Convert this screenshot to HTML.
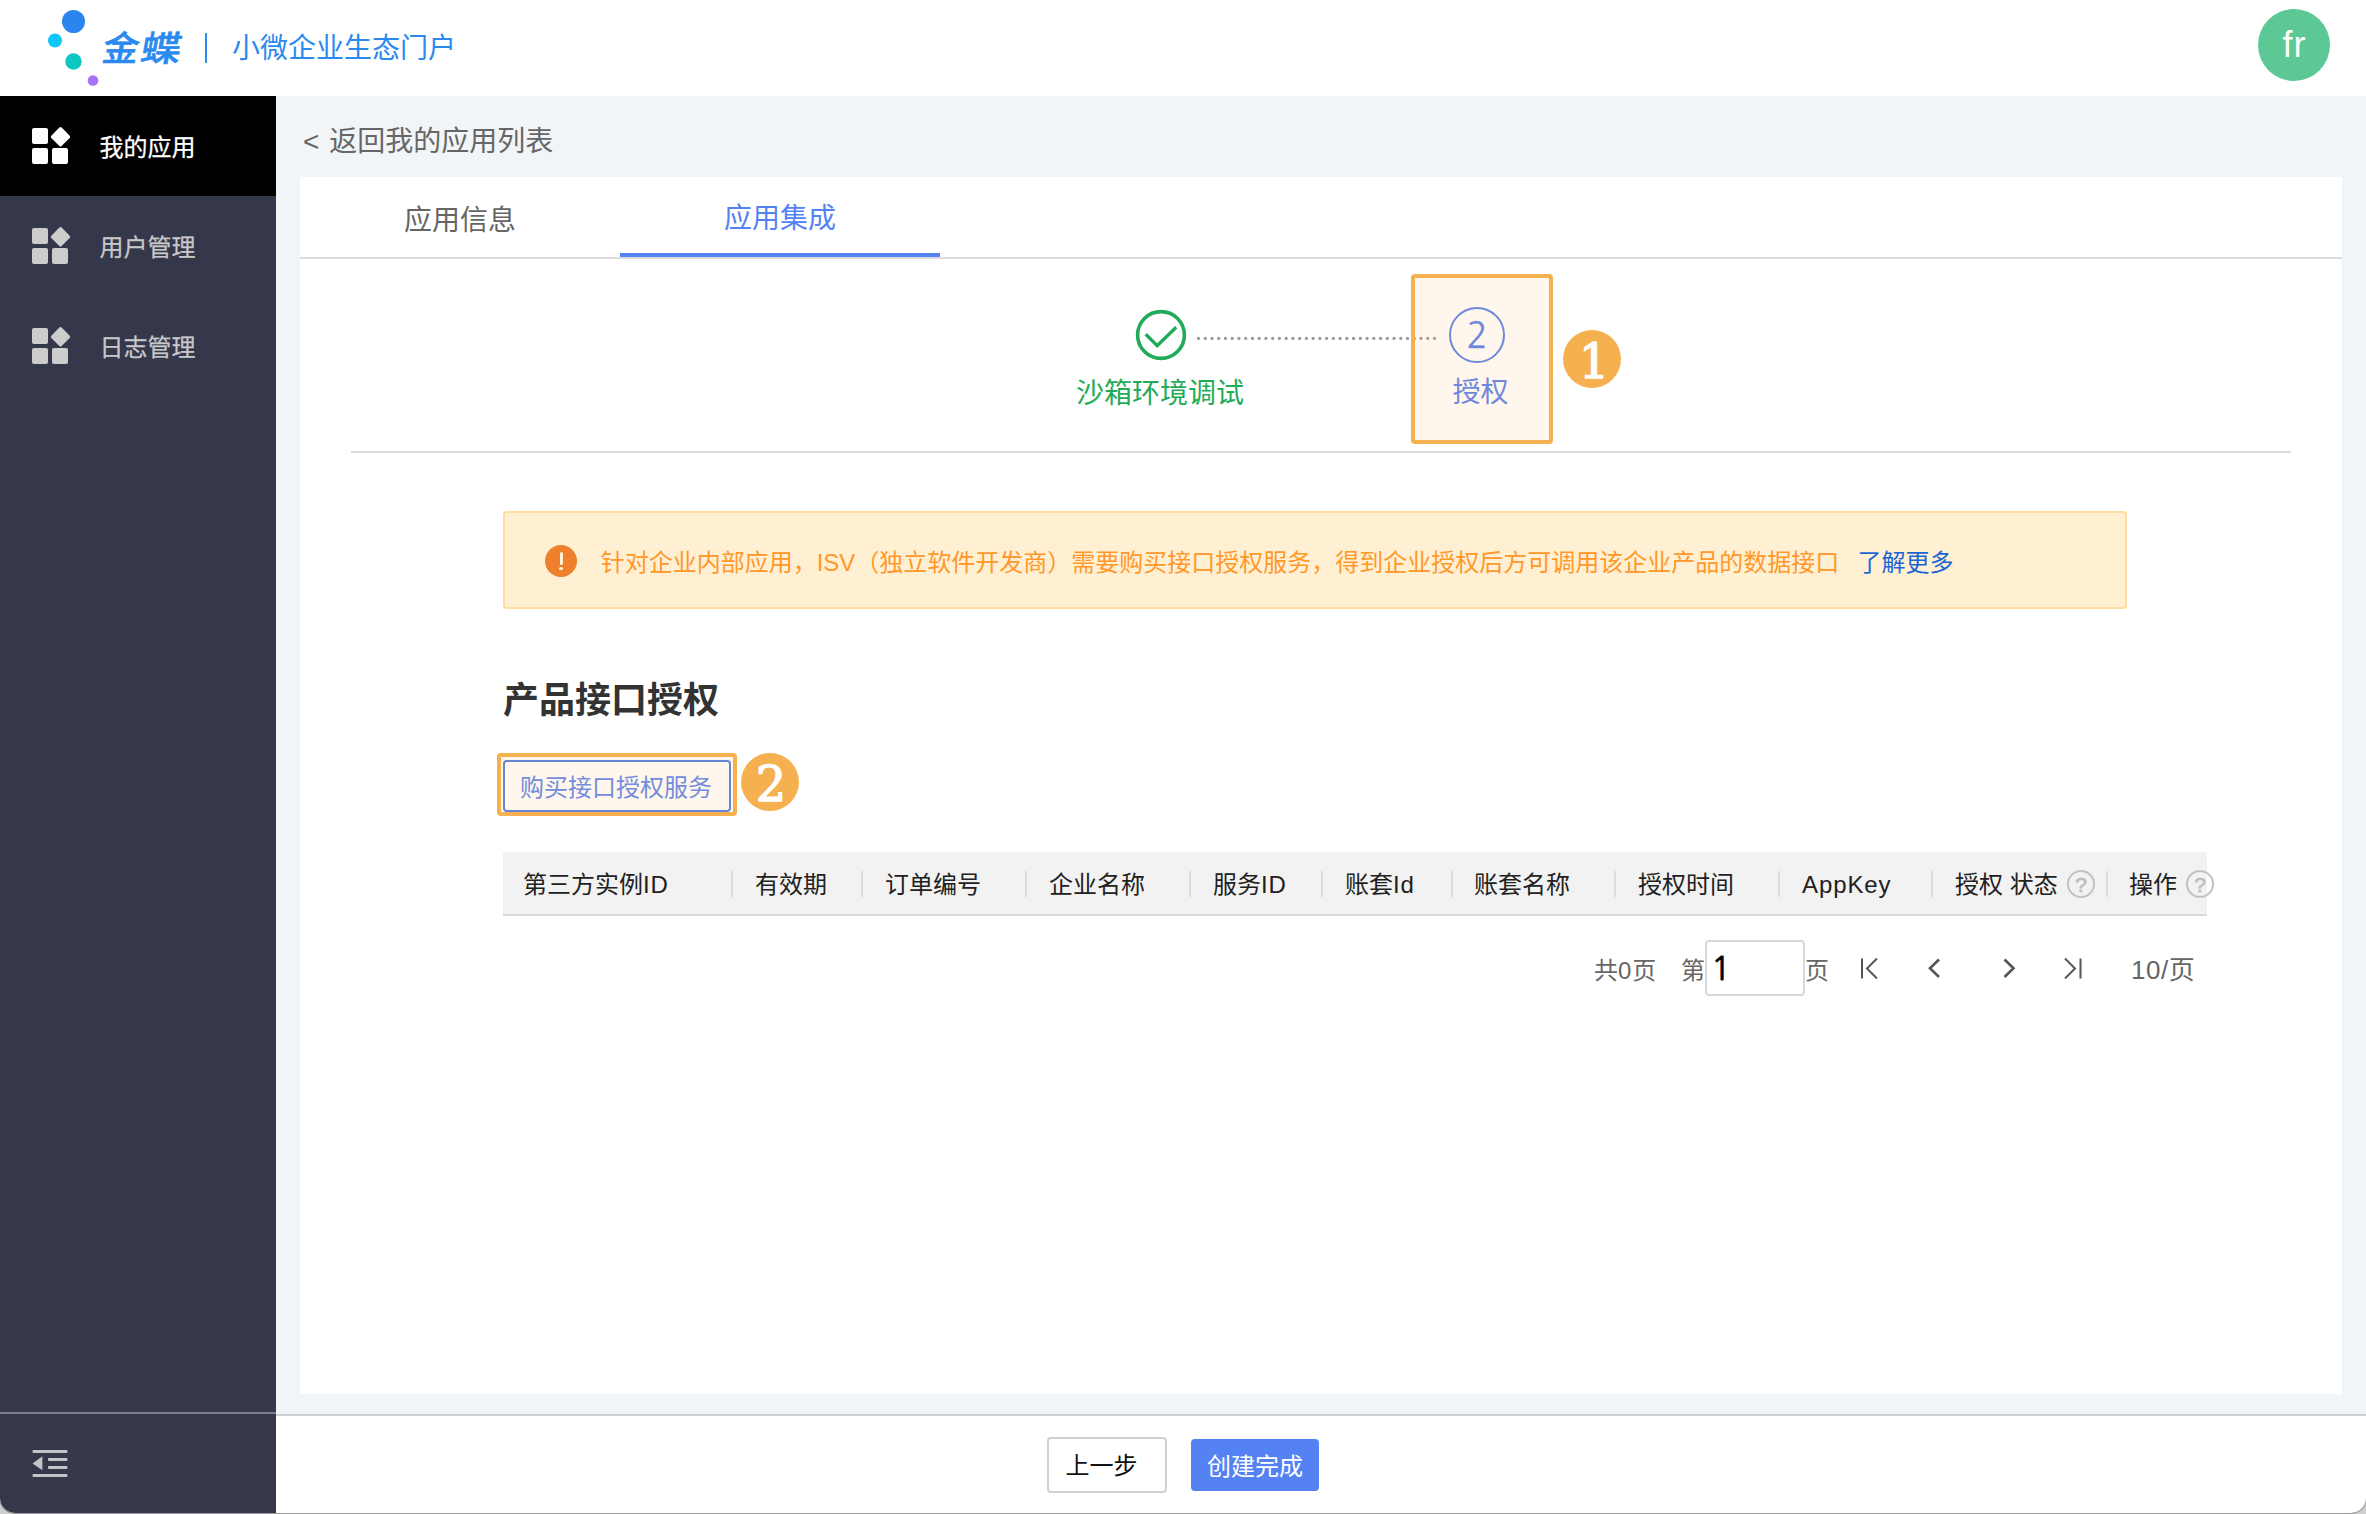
<!DOCTYPE html>
<html lang="zh-CN">
<head>
<meta charset="utf-8">
<title>小微企业生态门户</title>
<style>
*{box-sizing:border-box;margin:0;padding:0}
html,body{width:2366px;height:1514px;overflow:hidden;background:#fff}
body{position:relative;font-family:"Liberation Sans","Noto Sans CJK SC",sans-serif;color:#333;-webkit-font-smoothing:antialiased}
.abs{position:absolute}
.t{position:absolute;white-space:nowrap;line-height:1}
/* header */
#hdr{left:0;top:0;width:2366px;height:96px;background:#fff}
/* sidebar */
#side{left:0;top:96px;width:276px;height:1418px;background:#35374a;border-bottom-left-radius:14px}
#side .act{left:0;top:0;width:276px;height:100px;background:#000}
.mi{font-size:24px;color:#c8c8c8;left:99.5px;-webkit-text-stroke:0.25px currentColor}
/* main */
#main{left:276px;top:96px;width:2090px;height:1418px;background:#f1f5f8}
#card{left:300px;top:177px;width:2042px;height:1217px;background:#fff}
#foot{left:276px;top:1414px;width:2090px;height:100px;background:#fff;border-top:2px solid #d0d0d0}
#frame{left:0;top:-20px;width:2366px;height:1532.8px;border-radius:0 0 15px 15px;box-shadow:0 0 0 1px #9a9a9a,0 0 0 30px #cfcfd2;pointer-events:none}
.th{top:873px}
.la{letter-spacing:0.9px}
.sep{top:871px;width:2px;height:26px;background:#dcdcdc}
.q{top:870px;width:28px;height:28px;border:2.6px solid #c2c2c2;border-radius:50%}
.qt{top:874px;width:28px;text-align:center;font-size:21px;color:#bcbcbc;-webkit-text-stroke:0.6px #bcbcbc}
.bd{width:58px;text-align:center;font-size:48px;color:#fff;font-family:'DejaVu Serif','Liberation Serif',serif;-webkit-text-stroke:1.3px #fff}
</style>
</head>
<body>
<div id="hdr" class="abs"></div>
<div id="main" class="abs"></div>
<div id="side" class="abs"><div class="abs act"></div></div>
<div id="card" class="abs"></div>
<div id="foot" class="abs"></div>
<!--HEADER-->
<svg class="abs" style="left:40px;top:4px" width="70" height="88" viewBox="0 0 70 88">
<circle cx="33.5" cy="17.5" r="11.5" fill="#2a86ee"/>
<circle cx="15" cy="36.5" r="7" fill="#0fc6fb"/>
<circle cx="33.5" cy="57.5" r="8.2" fill="#0ec6c2"/>
<circle cx="53" cy="76.5" r="5.3" fill="#a970f8"/>
</svg>
<div class="t" id="logo" style="left:103px;top:30.5px;font-size:35px;font-weight:500;-webkit-text-stroke:0.5px #2b8af0;color:#2b8af0;letter-spacing:2px;transform:skewX(-10deg) scaleX(1.04);transform-origin:left center">金<span style="display:inline-block;transform:scaleX(1.1);transform-origin:left center">蝶</span></div>
<div class="abs" style="left:205px;top:33px;width:2px;height:30px;background:#2b8af0"></div>
<div class="t" id="portal" style="left:232px;top:34.7px;font-size:28px;color:#2b8af0;font-weight:400">小微企业生态门户</div>
<div class="abs" style="left:2258px;top:9px;width:72px;height:72px;border-radius:50%;background:#5bc895"></div>
<div class="t" id="fr" style="left:2258px;top:27px;width:72px;text-align:center;font-size:36px;letter-spacing:1px;text-indent:1px;color:#fff">fr</div>
<!--SIDEBAR-->
<svg width="0" height="0" style="position:absolute"><defs>
<g id="grid"><rect x="0" y="2" width="16" height="16" rx="2"/><rect x="0" y="22" width="16" height="16" rx="2"/><rect x="20" y="22" width="16" height="16" rx="2"/><rect x="21.2" y="3.5" width="14.6" height="14.6" rx="1.6" transform="rotate(45 28.5 10.8)"/></g>
</defs></svg>
<svg class="abs" style="left:32px;top:126px" width="40" height="40" fill="#fff"><use href="#grid"/></svg>
<svg class="abs" style="left:32px;top:226px" width="40" height="40" fill="#cdcdcd"><use href="#grid"/></svg>
<svg class="abs" style="left:32px;top:326px" width="40" height="40" fill="#cdcdcd"><use href="#grid"/></svg>
<div class="t mi" style="top:136px;color:#fff">我的应用</div>
<div class="t mi" style="top:236px">用户管理</div>
<div class="t mi" style="top:336px">日志管理</div>
<div class="abs" style="left:0;top:1412px;width:276px;height:2px;background:#7b7d8a"></div>
<svg class="abs" style="left:32px;top:1449px" width="38" height="30" viewBox="0 0 38 30" fill="#c3c4ca">
<rect x="0.5" y="1" width="35" height="3" rx="1"/><rect x="16" y="9" width="19.5" height="3" rx="1"/><rect x="16" y="17" width="19.5" height="3" rx="1"/><rect x="0.5" y="25" width="35" height="3" rx="1"/>
<path d="M0.5 14.4 L10.4 7.3 L10.4 21.3 Z"/>
</svg>
<!--TABS-->
<div class="t" id="back" style="left:303px;top:128px;font-size:28px;color:#666;word-spacing:2px">&lt; 返回我的应用列表</div>
<div class="abs" style="left:300px;top:257px;width:2042px;height:2px;background:#dcdcdc"></div>
<div class="t" id="tab1" style="left:300px;width:320px;text-align:center;top:207px;font-size:28px;color:#666">应用信息</div>
<div class="t" id="tab2" style="left:620px;width:320px;text-align:center;top:205px;font-size:28px;color:#5582f3">应用集成</div>
<div class="abs" style="left:620px;top:253px;width:320px;height:4px;background:#5582f3"></div>
<!--STEPS-->
<svg class="abs" style="left:1133px;top:307px" width="56" height="56" viewBox="0 0 56 56" fill="none" stroke="#1fab57" stroke-width="3.6">
<circle cx="28" cy="28" r="23.4"/><path d="M12.7 27.3 L24.2 38.6 L43.2 20.2" stroke-width="3.4" stroke-linecap="butt" stroke-linejoin="miter"/>
</svg>
<svg class="abs" style="left:1195px;top:334px" width="246" height="8"><line x1="3.5" y1="4.4" x2="243" y2="4.4" stroke="#989a9e" stroke-width="3.3" stroke-linecap="round" stroke-dasharray="0 6.743"/></svg>
<div class="abs" style="left:1449px;top:307px;width:56px;height:56px;border:2px solid #5b82e8;border-radius:50%"></div>
<div class="t" id="s2n" style="left:1449px;width:56px;text-align:center;top:318.3px;font-size:35px;color:#5b82e8;font-family:'NanumGothic','Liberation Sans',sans-serif;-webkit-text-stroke:0.3px #5b82e8">2</div>
<div class="t" id="s1l" style="left:1010px;width:300px;text-align:center;top:380px;font-size:28px;color:#1fab57">沙箱环境调试</div>
<div class="t" id="s2l" style="left:1410.5px;width:140px;text-align:center;top:378.6px;font-size:28px;color:#5b82e8">授权</div>
<div class="abs" style="left:1411px;top:274px;width:142px;height:170px;background:rgba(255,188,113,0.12);border:4px solid #f5b04f;border-radius:4px"></div>
<div class="abs" style="left:1563px;top:330px;width:58px;height:58px;border-radius:50%;background:#f5b04f"></div>
<div class="t bd" id="b1" style="left:1565px;top:336.5px">1</div>
<div class="abs" style="left:351px;top:451px;width:1940px;height:2px;background:#dcdcdc"></div>
<!--ALERT-->
<div class="abs" style="left:503px;top:511px;width:1624px;height:98px;background:#fff0d4;border:2px solid #ffdd9f;border-radius:4px"></div>
<div class="abs" style="left:545px;top:545px;width:32px;height:32px;border-radius:50%;background:#ed7f2d"></div>
<div class="abs" style="left:559.5px;top:552px;width:3px;height:12.5px;border-radius:1.5px;background:#fff0d4"></div>
<div class="abs" style="left:559.4px;top:567px;width:3.2px;height:3.2px;border-radius:1.6px;background:#fff0d4"></div>
<div class="t" id="atxt" style="left:600.7px;top:550.5px;font-size:24px;color:#ff9829">针对企业内部应用，ISV（独立软件开发商）需要购买接口授权服务，得到企业授权后方可调用该企业产品的数据接口</div>
<div class="t" id="alink" style="left:1857.5px;top:550.5px;font-size:24px;color:#1a66d6">了解更多</div>
<!--SECTION-->
<div class="t" id="h2" style="left:503px;top:682.5px;font-size:36px;font-weight:700;color:#333">产品接口授权</div>
<div class="abs" style="left:503px;top:760px;width:228px;height:52px;border:2px solid #547de2;border-radius:4px"></div>
<div class="t" id="buy" style="left:502px;width:228px;text-align:center;top:775.5px;font-size:24px;color:#6086ea">购买接口授权服务</div>
<div class="abs" style="left:497px;top:753px;width:240px;height:63px;background:rgba(255,188,113,0.12);border:4px solid #f5b04f;border-radius:4px"></div>
<div class="abs" style="left:740.6px;top:752.9px;width:58px;height:58px;border-radius:50%;background:#f5b04f"></div>
<div class="t bd" id="b2" style="left:742px;top:759.5px">2</div>
<!--TABLE-->
<div class="abs" style="left:503px;top:852px;width:1704px;height:64px;background:#f2f2f2;border-bottom:2px solid #dadada"></div>
<div id="ths" style="font-size:24px;color:#212121">
<div class="t th" style="left:523px">第三方实例<span class="la">ID</span></div>
<div class="t th" style="left:755px">有效期</div>
<div class="t th" style="left:885px">订单编号</div>
<div class="t th" style="left:1049px">企业名称</div>
<div class="t th" style="left:1213px">服务<span class="la">ID</span></div>
<div class="t th" style="left:1345px">账套<span class="la">Id</span></div>
<div class="t th" style="left:1474px">账套名称</div>
<div class="t th" style="left:1638px">授权时间</div>
<div class="t th" style="left:1802px"><span class="la">AppKey</span></div>
<div class="t th" style="left:1955px">授权 状态</div>
<div class="t th" style="left:2129px">操作</div>
</div>
<div class="abs sep" style="left:731px"></div><div class="abs sep" style="left:861px"></div><div class="abs sep" style="left:1025px"></div><div class="abs sep" style="left:1189px"></div><div class="abs sep" style="left:1321px"></div><div class="abs sep" style="left:1451px"></div><div class="abs sep" style="left:1614px"></div><div class="abs sep" style="left:1778px"></div><div class="abs sep" style="left:1931px"></div><div class="abs sep" style="left:2106px"></div>
<div class="abs q" style="left:2067px"></div><div class="t qt" style="left:2067px">?</div>
<div class="abs q" style="left:2186px"></div><div class="t qt" style="left:2186px">?</div>
<!--PAGER-->
<div id="pg" style="font-size:24px;color:#666">
<div class="t" style="left:1594px;top:959px">共<span class="la">0</span>页</div>
<div class="t" style="left:1681px;top:959px">第</div>
<div class="abs" style="left:1705px;top:940px;width:100px;height:56px;border:2px solid #d9d9d9;border-radius:4px;background:#fff"></div>
<div class="t" id="pin" style="left:1711px;top:952px;font-size:33px;color:#000;font-family:'NanumGothic','Liberation Sans',sans-serif;-webkit-text-stroke:0.8px #000">1</div>
<div class="t" style="left:1805px;top:959px">页</div>
<div class="t" style="left:2131px;top:957px;font-size:26px"><span style="letter-spacing:0.5px">10/</span>页</div>
</div>
<svg class="abs" style="left:1856px;top:954px" width="230" height="30" fill="none" stroke="#555" stroke-width="2">
<path d="M6 4.5 V24.5 M21 4.5 L11 14.5 L21 24.5"/>
<path d="M83 5.5 L74 14.3 L83 23" stroke-width="2.6"/>
<path d="M148.5 5.5 L157.5 14.3 L148.5 23" stroke-width="2.6"/>
<path d="M224.5 4.5 V24.5 M209 4.5 L219 14.5 L209 24.5"/>
</svg>
<!--FOOTER-->
<div id="frame" class="abs"></div>
<div class="abs" style="left:1047px;top:1437px;width:120px;height:56px;border:2px solid #d0d0d0;border-radius:4px;background:#fff"></div>
<div class="t" id="prev" style="left:1065.5px;top:1454px;font-size:24px;color:#111">上一步</div>
<div class="abs" style="left:1191px;top:1439px;width:128px;height:52px;border-radius:4px;background:#5582f3"></div>
<div class="t" id="done" style="left:1191px;width:128px;text-align:center;top:1454.5px;font-size:24px;color:#fff">创建完成</div>
</body>
</html>
